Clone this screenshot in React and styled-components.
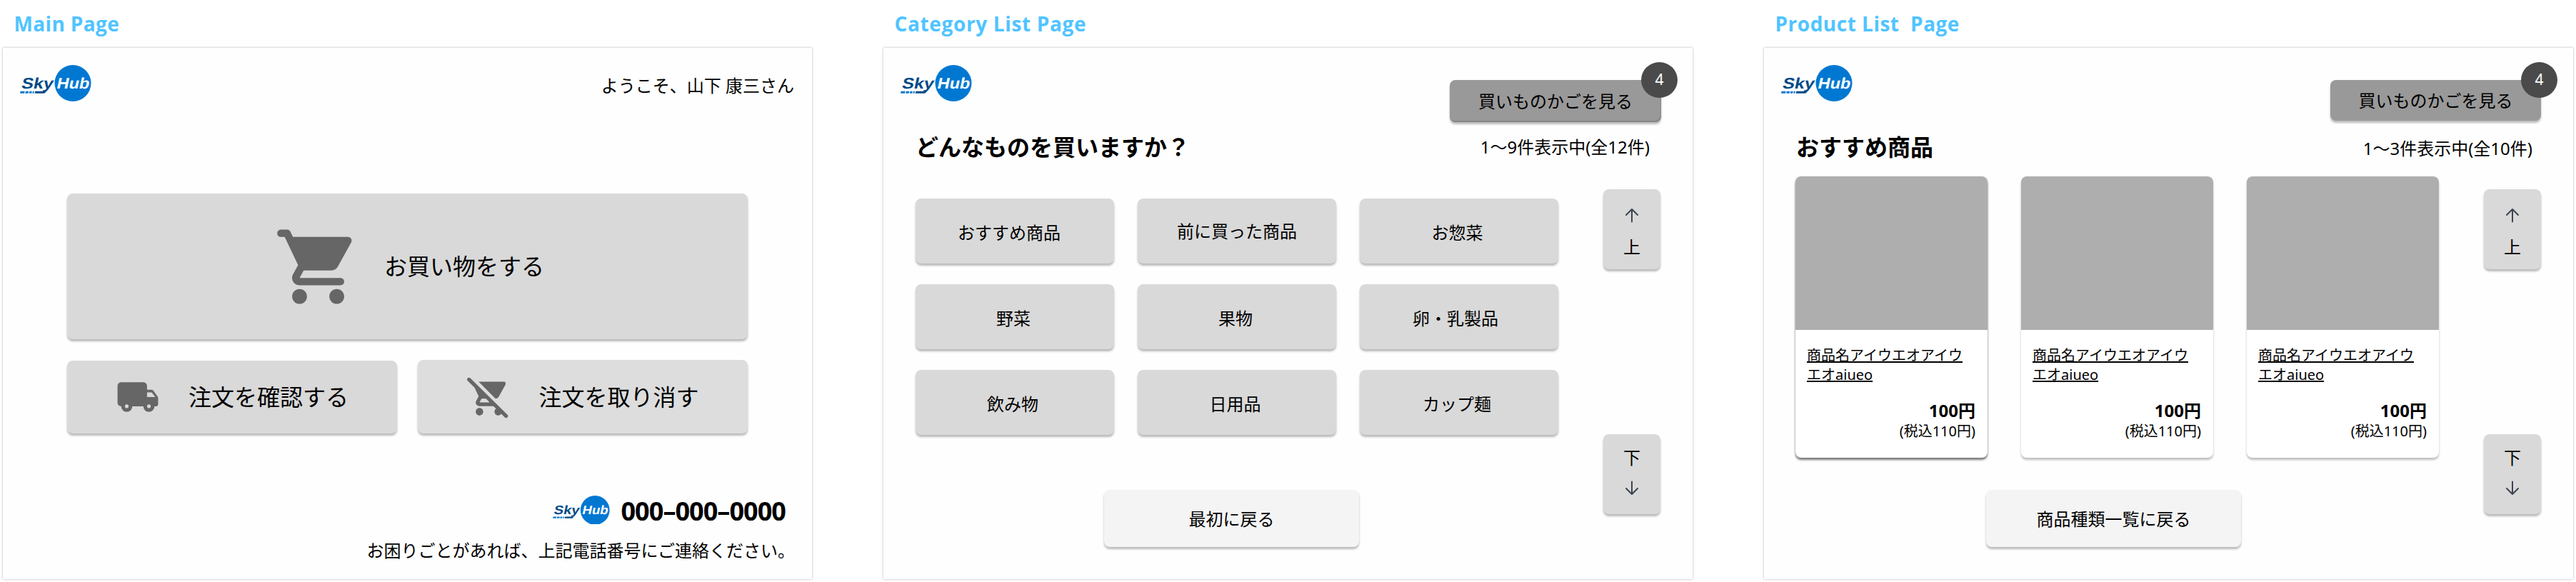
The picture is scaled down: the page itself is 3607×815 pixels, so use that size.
import React from "react";
import styled, { createGlobalStyle } from "styled-components";

const GlobalStyle = createGlobalStyle`
  * { box-sizing: border-box; }
  body {
    margin: 0;
    background: #fff;
    color: #000;
    font-family: "Noto Sans", "Noto Sans CJK JP", sans-serif;
  }
`;

const lift = "0 3px 3px rgba(0, 0, 0, 0.27)";

const Board = styled.main`
  display: flex;
  gap: 100px;
  width: 3607px;
  height: 815px;
  padding-left: 4px;
  overflow: hidden;
`;

const Page = styled.section`
  flex: none;
  width: 1133px;
`;

const PageLabel = styled.h2`
  height: 67px;
  margin: 0;
  padding: 15px 0 0 15.5px;
  font-family: "Open Sans", sans-serif;
  font-size: 28px;
  font-weight: 700;
  line-height: 36px;
  letter-spacing: ${(p) => p.$tracking}px;
  white-space: pre;
  color: #50c4ff;
`;

const Screen = styled.div`
  display: flex;
  flex-direction: column;
  height: 744px;
  background: #fefefe;
  box-shadow: 0 0 3px rgba(0, 0, 0, 0.3);
`;

const Header = styled.header`
  display: flex;
  justify-content: space-between;
  align-items: flex-start;
  height: 112px;
  padding: 24px ${(p) => p.$right}px 0 24px;
`;

const Welcome = styled.p`
  margin: 11px 0 0;
  font-size: 24px;
  line-height: 36px;
`;

const Button = styled.button`
  display: flex;
  align-items: center;
  justify-content: center;
  padding: 0;
  border: 0;
  border-radius: 8px;
  background: #d9d9d9;
  box-shadow: ${lift};
  color: #000;
  font-family: inherit;
  font-size: 24px;
  line-height: 36px;
`;

const MainMenu = styled.nav`
  display: flex;
  flex-direction: column;
  gap: 29px;
  margin: 92px 90px 0;
`;

const MenuRow = styled.div`
  display: flex;
  justify-content: space-between;
  align-items: flex-end;
`;

const MenuButton = styled(Button)`
  gap: ${(p) => p.$gap}px;
  width: ${(p) => p.$width}px;
  height: ${(p) => p.$height}px;
  padding-left: ${(p) => p.$inset || 0}px;
  background: ${(p) => p.$tone || "#d9d9d9"};
  font-size: 32px;
  line-height: 48px;
`;

const Support = styled.footer`
  display: flex;
  flex-direction: column;
  align-items: flex-end;
  margin-top: 84px;
`;

const PhoneLine = styled.div`
  display: flex;
  align-items: center;
  gap: 15px;
  height: 46px;
  padding-right: 37px;
`;

const Phone = styled.strong`
  padding-top: 3px;
  font-size: 36px;
  line-height: 40px;
  letter-spacing: -0.95px;
`;

const Hint = styled.p`
  margin: 16px 24px 0 0;
  font-size: 24px;
  line-height: 36px;
`;

const CartButton = styled(Button)`
  position: relative;
  width: ${(p) => (p.$pressed ? 296 : 295)}px;
  height: ${(p) => (p.$pressed ? 59 : 57)}px;
  margin-top: 21px;
  background: #999;
  box-shadow: ${(p) => (p.$pressed ? `inset -1px -2px 1px #858585, ${lift}` : lift)};
`;

const Badge = styled.span`
  position: absolute;
  top: -25px;
  right: -23px;
  width: 51px;
  height: 50px;
  border-radius: 50%;
  background: #4a4a4a;
  color: #fff;
  font-size: 21px;
  font-weight: 400;
  line-height: 49px;
  text-align: center;
`;

const TitleRow = styled.div`
  display: flex;
  justify-content: space-between;
  align-items: center;
  height: 54px;
  padding: 0 ${(p) => p.$right}px 0 45px;
`;

const Title = styled.h1`
  margin: 0;
  font-size: 32px;
  font-weight: 700;
  line-height: 48px;
`;

const Count = styled.span`
  padding-top: ${(p) => p.$drop || 0}px;
  font-size: 24px;
  line-height: 36px;
`;

const Body = styled.div`
  display: flex;
  justify-content: space-between;
  padding: 0 45px 0 ${(p) => p.$left}px;
`;

const Column = styled.div`
  display: flex;
  flex-direction: column;
`;

const CategoryGrid = styled.div`
  display: grid;
  grid-template-columns: repeat(3, 278px);
  grid-auto-rows: 91px;
  gap: 29px 33px;
  margin-top: 45px;
`;

const CategoryButton = styled(Button)`
  padding: ${(p) => p.$drop}px ${(p) => p.$shift}px 0 0;
`;

const BackButton = styled(Button)`
  width: 357px;
  height: 80px;
  margin: ${(p) => p.$top}px 0 0 ${(p) => p.$left}px;
  padding: 2px 0 0;
  background: #f4f4f4;
`;

const Pager = styled.div`
  display: flex;
  flex-direction: column;
  justify-content: space-between;
  height: 455px;
  margin-top: 32px;
`;

const PagerButton = styled(Button)`
  flex-direction: column;
  justify-content: flex-start;
  gap: ${(p) => p.$gap}px;
  width: 80px;
  height: 112px;
  padding-top: ${(p) => p.$top}px;
  line-height: 24px;
`;

const ProductList = styled.div`
  display: flex;
  gap: 47px;
  margin-top: 14px;
`;

const Card = styled.article`
  width: 269px;
  height: 394px;
  border-radius: 8px;
  background: #fff;
  box-shadow: ${(p) =>
    p.$active ? "0 3px 3px rgba(0, 0, 0, 0.52), 0 0 2px rgba(0, 0, 0, 0.15)" : "0 3px 3px rgba(0, 0, 0, 0.25)"};
  overflow: hidden;
`;

const Photo = styled.div`
  height: 215px;
  background: #aeaeae;
`;

const CardText = styled.div`
  padding: 22px 17px 0 16px;
  line-height: 27px;
`;

const ProductName = styled.a`
  display: block;
  font-size: 20px;
  text-decoration: underline;
`;

const Price = styled.div`
  margin-top: 22px;
  font-size: 24px;
  font-weight: 700;
  line-height: 30px;
  text-align: right;
`;

const Tax = styled.div`
  font-size: 20px;
  text-align: right;
`;

const slanted = {
  fontFamily: '"Liberation Sans", sans-serif',
  fontSize: 21.5,
  fontWeight: 700,
  lengthAdjust: "spacingAndGlyphs",
};

const Logo = ({ width = 100 }) => (
  <svg width={width} height={width * 0.51} viewBox="0 0 100 51" aria-label="SkyHub">
    <circle cx="74" cy="25.5" r="25.5" fill="#0078d2" />
    <text transform="translate(1 32.6) skewX(-12)" fill="#004a87" textLength="44.5" {...slanted}>
      Sky
    </text>
    <text transform="translate(50.5 32.6) skewX(-12)" fill="#fff" textLength="45.5" {...slanted}>
      Hub
    </text>
    <g fill="#0a78cc">
      <path d="M.6 36.8h6l-.6 2.9H0z" />
      <path d="M7.8 36.8h4.4l-.6 2.9H7.2z" />
      <path d="M13.4 36.8h3.4l-.6 2.9h-3.4z" />
      <path d="M18 36.8h2l-.6 2.9h-2z" />
    </g>
    <path d="M21.3 36.8H36.500c-.6 1.900-1.600 2.900-3.600 2.900H20.700z" fill="#004a87" />
  </svg>
);

const Icon = ({ size, children }) => (
  <svg width={size} height={size} viewBox="0 0 24 24" fill="#666">
    {children}
  </svg>
);

const CartIcon = () => (
  <Icon size={125}>
    <path d="M7 18c-1.100 0-1.990.9-1.990 2S5.900 22 7 22s2-.9 2-2-.9-2-2-2zM1 3c0 .55.45 1 1 1h1l3.600 7.590-1.350 2.440C4.520 15.370 5.480 17 7 17h11c.55 0 1-.45 1-1s-.45-1-1-1H7l1.100-2h7.450c.75 0 1.410-.41 1.750-1.030l3.580-6.490c.37-.66-.11-1.480-.87-1.480H5.210l-.67-1.430c-.16-.35-.52-.57-.9-.57H2c-.55 0-1 .45-1 1zm16 15c-1.100 0-1.990.9-1.990 2s.89 2 1.990 2 2-.9 2-2-.9-2-2-2z" />
  </Icon>
);

const TruckIcon = () => (
  <Icon size={62}>
    <path d="M19.500 8H17V6c0-1.100-.9-2-2-2H3c-1.100 0-2 .9-2 2v9c0 1.100.9 2 2 2 0 1.660 1.340 3 3 3s3-1.340 3-3h6c0 1.660 1.340 3 3 3s3-1.340 3-3h1c.55 0 1-.45 1-1v-3.330c0-.43-.14-.85-.4-1.200L20.300 8.400c-.19-.25-.49-.4-.8-.4zM6 18c-.55 0-1-.45-1-1s.45-1 1-1 1 .45 1 1-.45 1-1 1zm13.500-8.500l1.960 2.500H17V9.500h2.500zM18 18c-.55 0-1-.45-1-1s.45-1 1-1 1 .45 1 1-.45 1-1 1z" />
  </Icon>
);

const CartOffIcon = () => (
  <Icon size={63}>
    <path d="M15.550 13c.75 0 1.410-.41 1.750-1.030l3.580-6.490C21.250 4.820 20.760 4 20 4H6.540l9.010 9zM2.100 2.100c-.39-.39-1.020-.39-1.410 0-.39.39-.39 1.020 0 1.410l3.680 3.680 2.210 4.660-1.350 2.450c-.16.28-.25.61-.25.96C5 16.100 5.900 17 7 17h7.460l1.380 1.380c-.5.36-.83.95-.83 1.620 0 1.100.89 2 1.990 2 .67 0 1.260-.33 1.620-.84l1.870 1.870c.39.39 1.020.39 1.410 0s.39-1.020 0-1.410L2.100 2.100zM7.420 15c-.14 0-.25-.11-.25-.25l.03-.12.9-1.630h2.360l2 2H7.420zM7 18c-1.100 0-1.990.9-1.990 2S5.900 22 7 22s2-.9 2-2-.9-2-2-2z" />
  </Icon>
);

const Arrow = ({ down }) => (
  <svg
    width="24"
    height="24"
    viewBox="0 0 24 24"
    fill="none"
    stroke="#3d4452"
    strokeWidth="2"
    strokeLinecap="round"
    strokeLinejoin="round"
  >
    <path d={down ? "M12 3.500v17M20 13l-8 8-8-8" : "M12 20.500v-17M4 11l8-8 8 8"} />
  </svg>
);

const CartLink = ({ pressed }) => (
  <CartButton $pressed={pressed}>
    買いものかごを見る
    <Badge>4</Badge>
  </CartButton>
);

const PagerControls = () => (
  <Pager>
    <PagerButton $top={25} $gap={20}>
      <Arrow />
      上
    </PagerButton>
    <PagerButton $top={21} $gap={18}>
      下
      <Arrow down />
    </PagerButton>
  </Pager>
);

const categories = [
  { name: "おすすめ商品", shift: 16, drop: 5 },
  { name: "前に買った商品", shift: 0, drop: 1 },
  { name: "お惣菜", shift: 5, drop: 5 },
  { name: "野菜", shift: 4, drop: 5 },
  { name: "果物", shift: 4, drop: 5 },
  { name: "卵・乳製品", shift: 10, drop: 5 },
  { name: "飲み物", shift: 6, drop: 5 },
  { name: "日用品", shift: 5, drop: 5 },
  { name: "カップ麺", shift: 6, drop: 5 },
];

const products = [
  { id: 1, name: "商品名アイウエオアイウエオaiueo", price: 100, taxed: 110, active: true },
  { id: 2, name: "商品名アイウエオアイウエオaiueo", price: 100, taxed: 110 },
  { id: 3, name: "商品名アイウエオアイウエオaiueo", price: 100, taxed: 110 },
];

const MainPage = () => (
  <Page>
    <PageLabel $tracking={0.35}>Main Page</PageLabel>
    <Screen>
      <Header $right={25}>
        <Logo />
        <Welcome>ようこそ、山下 康三さん</Welcome>
      </Header>
      <MainMenu>
        <MenuButton $width={953} $height={204} $gap={30} $inset={4}>
          <CartIcon />
          お買い物をする
        </MenuButton>
        <MenuRow>
          <MenuButton $width={462} $height={102} $gap={40}>
            <TruckIcon />
            注文を確認する
          </MenuButton>
          <MenuButton $width={462} $height={103} $gap={38} $tone="#ddd">
            <CartOffIcon />
            注文を取り消す
          </MenuButton>
        </MenuRow>
      </MainMenu>
      <Support>
        <PhoneLine>
          <Logo width={80} />
          <Phone>000–000–0000</Phone>
        </PhoneLine>
        <Hint>お困りごとがあれば、上記電話番号にご連絡ください。</Hint>
      </Support>
    </Screen>
  </Page>
);

const CategoryListPage = () => (
  <Page>
    <PageLabel $tracking={0.65}>Category List Page</PageLabel>
    <Screen>
      <Header $right={44}>
        <Logo />
        <CartLink pressed />
      </Header>
      <TitleRow $right={60}>
        <Title>どんなものを買いますか？</Title>
        <Count>1〜9件表示中(全12件)</Count>
      </TitleRow>
      <Body $left={45}>
        <Column>
          <CategoryGrid>
            {categories.map((c) => (
              <CategoryButton key={c.name} $shift={c.shift} $drop={c.drop}>
                {c.name}
              </CategoryButton>
            ))}
          </CategoryGrid>
          <BackButton $top={77} $left={264}>
            最初に戻る
          </BackButton>
        </Column>
        <PagerControls />
      </Body>
    </Screen>
  </Page>
);

const ProductListPage = () => (
  <Page>
    <PageLabel $tracking={0.5}>{"Product List  Page"}</PageLabel>
    <Screen>
      <Header $right={45}>
        <Logo />
        <CartLink />
      </Header>
      <TitleRow $right={57}>
        <Title>おすすめ商品</Title>
        <Count $drop={4}>1〜3件表示中(全10件)</Count>
      </TitleRow>
      <Body $left={44}>
        <Column>
          <ProductList>
            {products.map((p) => (
              <Card key={p.id} $active={p.active}>
                <Photo />
                <CardText>
                  <ProductName>{p.name}</ProductName>
                  <Price>{p.price}円</Price>
                  <Tax>(税込{p.taxed}円)</Tax>
                </CardText>
              </Card>
            ))}
          </ProductList>
          <BackButton $top={45} $left={267}>
            商品種類一覧に戻る
          </BackButton>
        </Column>
        <PagerControls />
      </Body>
    </Screen>
  </Page>
);

export default function App() {
  return (
    <>
      <GlobalStyle />
      <Board>
        <MainPage />
        <CategoryListPage />
        <ProductListPage />
      </Board>
    </>
  );
}
